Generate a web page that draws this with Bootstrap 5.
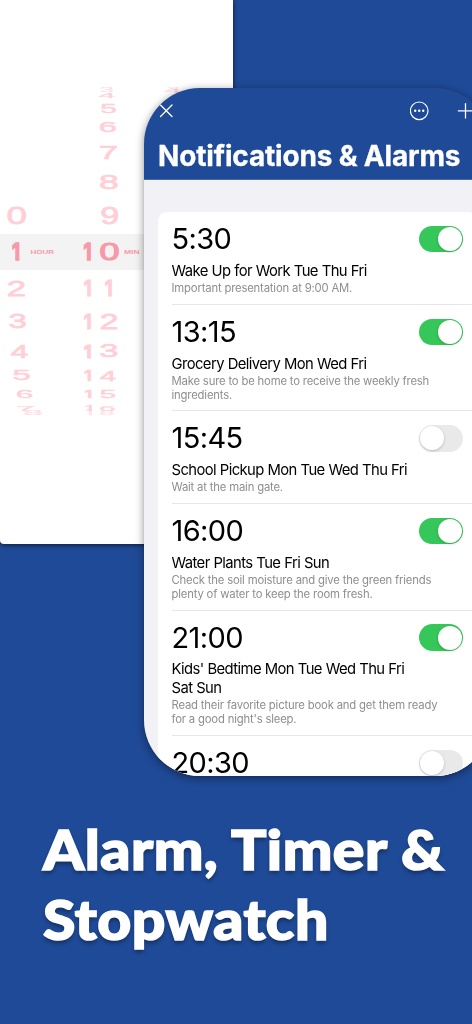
<!DOCTYPE html>
<html lang="en">
<head>
  <meta charset="UTF-8">
  <meta name="viewport" content="width=device-width, initial-scale=1">
  <title>Alarm, Timer &amp; Stopwatch</title>
  <link href="https://cdn.jsdelivr.net/npm/bootstrap@5.3.0/dist/css/bootstrap.min.css" rel="stylesheet">
  <style>
    body {
      background-color: #1f4a97;
      font-family: Inter, "Liberation Sans", sans-serif;
      color: #000;
    }
    .poster {
      width: 472px;
      height: 1024px;
    }
    /* timer screen behind the phone */
    .timer-screen {
      left: 0;
      top: 0;
      width: 233px;
      height: 543.5px;
      background: #fff;
      border-bottom-left-radius: 4px;
      box-shadow: 0 1px 5px rgba(0, 0, 0, .65);
    }
    .wheel-light { fill: #ffcfd7; stroke: #ffcfd7; }
    .wheel-dark { fill: #f799a8; stroke: #f799a8; }
    .phone {
      width: 347px;
      height: 688.5px;
      margin: 87.5px 0 0 144px;
      border-radius: 56px;
      background: #1f4a97;
    }
    .phone-shadow {
      width: 347px;
      filter: drop-shadow(0 2px 4px rgba(0, 0, 0, .45));
    }
    .phone-header {
      height: 92.5px;
      border-bottom: 1px solid #4669a9;
      padding: 12.5px 0 0 14px;
    }
    .phone-header .toolbar { height: 22px; width: 320px; }
    .phone-header h1 {
      font-size: 28px;
      line-height: 34px;
      margin-top: 16.5px;
      letter-spacing: -.17px;
      -webkit-text-stroke: .3px #fff;
    }
    .phone-body {
      height: 596px;
      padding: 32px 14px 0;
      background: #f2f1f6;
    }
    .alarm-list {
      background: #fff;
      border-radius: 9px;
      padding-left: 13.5px;
    }
    .alarm {
      padding: 9px 14px 7.9px 0;
      border-bottom: 1px solid #e6e6e8;
    }
    .alarm-time {
      font-size: 29px;
      line-height: 36px;
      letter-spacing: -.6px;
    }
    .alarm-name {
      font-size: 14.8px;
      line-height: 18.6px;
      letter-spacing: -.58px;
      word-spacing: .2px;
      padding-top: 4.8px;
    }
    .alarm-note {
      font-size: 11.3px;
      line-height: 13.8px;
      letter-spacing: -.18px;
      padding-top: 1.7px;
      color: #8e8e90;
    }
    .toggle {
      width: 44px;
      height: 26.5px;
      border-radius: 14px;
      background: #e9e9ea;
      padding: 1.25px;
    }
    .toggle.on { background: #35c759; }
    .knob {
      width: 24px;
      height: 24px;
      border-radius: 50%;
      background: #fff;
      box-shadow: 0 1px 3px rgba(0, 0, 0, .2);
    }
    .headline {
      font-family: Lato, "Open Sans", sans-serif;
      font-weight: 900;
      font-size: 55px;
      line-height: 69.5px;
      color: #fff;
      margin: 39px 0 0 43px;
      letter-spacing: .5px;
      -webkit-text-stroke: 1.6px #fff;
      text-shadow: 0 3px 4px rgba(0, 0, 0, .4);
      transform: scaleX(1.07);
      transform-origin: left;
    }
  </style>
</head>
<body>
  <div class="poster position-relative overflow-hidden">
    <div class="timer-screen position-absolute">
      <svg id="wheels" width="233" height="540" viewBox="0 0 233 540">
        <rect x="0" y="234" width="233" height="36" fill="#f3f3f3"/>
      </svg>
    </div>

    <div class="phone-shadow position-relative d-inline-block align-top">
      <div class="phone overflow-hidden">
        <div class="phone-header text-white">
          <div class="toolbar d-flex align-items-center">
            <svg width="16" height="22" viewBox="0 0 16 22" fill="none" stroke="#fff" stroke-width="1.3" stroke-linecap="round">
              <path d="M2.5 5 L14 16.5 M14 5 L2.5 16.5"/>
            </svg>
            <svg class="ms-auto" width="20" height="22" viewBox="0 0 20 22">
              <circle cx="9.2" cy="10.8" r="8.8" fill="none" stroke="#fff" stroke-width="1.2"/>
              <circle cx="5.2" cy="10.8" r="1.2" fill="#fff"/>
              <circle cx="9.2" cy="10.8" r="1.2" fill="#fff"/>
              <circle cx="13.2" cy="10.8" r="1.2" fill="#fff"/>
            </svg>
            <svg class="ms-4" width="24" height="22" viewBox="0 0 24 22" stroke="#fff" stroke-width="1.3" stroke-linecap="round">
              <path d="M4.3 10.8 H19 M11.5 3.6 V18"/>
            </svg>
          </div>
          <h1 class="fw-bold mb-0 text-nowrap">Notifications &amp; Alarms</h1>
        </div>

        <div class="phone-body">
          <div class="alarm-list text-nowrap">
            <div class="alarm">
              <div class="d-flex justify-content-between align-items-center">
                <div class="alarm-time">5:30</div>
                <div class="toggle on d-flex justify-content-end"><div class="knob"></div></div>
              </div>
              <div class="alarm-name">Wake Up for Work Tue Thu Fri</div>
              <div class="alarm-note">Important presentation at 9:00 AM.</div>
            </div>
            <div class="alarm">
              <div class="d-flex justify-content-between align-items-center">
                <div class="alarm-time">13:15</div>
                <div class="toggle on d-flex justify-content-end"><div class="knob"></div></div>
              </div>
              <div class="alarm-name">Grocery Delivery Mon Wed Fri</div>
              <div class="alarm-note">Make sure to be home to receive the weekly fresh<br>ingredients.</div>
            </div>
            <div class="alarm">
              <div class="d-flex justify-content-between align-items-center">
                <div class="alarm-time">15:45</div>
                <div class="toggle d-flex"><div class="knob"></div></div>
              </div>
              <div class="alarm-name">School Pickup Mon Tue Wed Thu Fri</div>
              <div class="alarm-note">Wait at the main gate.</div>
            </div>
            <div class="alarm">
              <div class="d-flex justify-content-between align-items-center">
                <div class="alarm-time">16:00</div>
                <div class="toggle on d-flex justify-content-end"><div class="knob"></div></div>
              </div>
              <div class="alarm-name">Water Plants Tue Fri Sun</div>
              <div class="alarm-note">Check the soil moisture and give the green friends<br>plenty of water to keep the room fresh.</div>
            </div>
            <div class="alarm">
              <div class="d-flex justify-content-between align-items-center">
                <div class="alarm-time">21:00</div>
                <div class="toggle on d-flex justify-content-end"><div class="knob"></div></div>
              </div>
              <div class="alarm-name">Kids' Bedtime Mon Tue Wed Thu Fri<br>Sat Sun</div>
              <div class="alarm-note">Read their favorite picture book and get them ready<br>for a good night's sleep.</div>
            </div>
            <div class="alarm">
              <div class="d-flex justify-content-between align-items-center">
                <div class="alarm-time">20:30</div>
                <div class="toggle d-flex"><div class="knob"></div></div>
              </div>
            </div>
          </div>
        </div>
      </div>
    </div>

    <div class="headline text-nowrap">
      <div>Alarm, Timer &amp;</div>
      <div>Stopwatch</div>
    </div>
  </div>

  <script src="https://cdn.jsdelivr.net/npm/bootstrap@5.3.0/dist/js/bootstrap.bundle.min.js"></script>
  <script>
    // wheel labels: text, left, top, right, bottom, dark, opacity
    const labels = [
      ["0", 7, 207, 26, 224.5], ["1", 12, 242, 19.5, 260.5, 1], ["HOUR", 31, 249.7, 54, 254, 1],
      ["2", 8, 279, 25, 296], ["3", 9, 313, 26, 329], ["4", 11, 344, 28, 358],
      ["5", 13.5, 370, 30, 381], ["6", 17, 390.5, 32.5, 398.5],
      ["7", 17, 405, 34, 411, 0, .9], ["8", 24, 410, 42, 415.5, 0, .7],
      ["3", 100, 87.5, 113, 92.5, 0, .7], ["4", 99, 93, 115, 98],
      ["5", 101, 104, 116, 113], ["6", 100, 122, 116, 133], ["7", 100, 145, 117, 159],
      ["8", 100, 174, 118, 190], ["9", 101, 207, 118, 224.5],
      ["1", 83.5, 242, 91, 260.5, 1], ["0", 100, 242, 119, 260.5, 1], ["MIN", 124.5, 249.7, 139, 254, 1],
      ["1", 84, 279, 91, 296], ["1", 105, 279, 112, 296],
      ["1", 84, 313, 91, 329], ["2", 101, 313, 117.5, 329],
      ["1", 84, 344, 91, 358], ["3", 100, 344, 117.5, 358],
      ["1", 84.5, 370, 91, 381], ["4", 100, 370, 116, 381],
      ["1", 85, 390.5, 91.5, 398.5], ["5", 100.5, 390.5, 115.5, 398.5],
      ["1", 85.5, 405, 92, 411, 0, .9], ["6", 100, 405, 115, 411, 0, .9],
      ["1", 86, 410, 92, 415.5, 0, .6], ["8", 100, 410, 114, 415.5, 0, .6],
      ["3", 166, 87.5, 179, 90, 0, .7], ["4", 164, 89, 181, 93, 0, .8]
    ];

    const svg = document.getElementById("wheels");
    const ctx = document.createElement("canvas").getContext("2d");

    // stretch each label into its box on the wheel
    labels.forEach(([text, x1, y1, x2, y2, dark, opacity]) => {
      const family = text === "1" ? "Inter" : "Liberation Sans";
      const weight = text === "1" || text.length > 1 ? 700 : 400;
      // digits get an even outline, thinner towards the ends of the wheel
      const stroke = text.length > 1 ? 0 : (dark ? 1.4 : Math.min(1, (y2 - y1) / 14));
      const h = stroke / 2;
      ctx.font = `${weight} 100px "${family}"`;
      const m = ctx.measureText(text);
      const sx = (x2 - x1 - stroke) / (m.actualBoundingBoxLeft + m.actualBoundingBoxRight);
      const sy = (y2 - y1 - stroke) / (m.actualBoundingBoxAscent + m.actualBoundingBoxDescent);
      const t = document.createElementNS("http://www.w3.org/2000/svg", "text");
      t.setAttribute("transform", `matrix(${sx} 0 0 ${sy} ${x1 + h + m.actualBoundingBoxLeft * sx} ${y2 - h - m.actualBoundingBoxDescent * sy})`);
      t.setAttribute("font-family", family);
      t.setAttribute("font-size", 100);
      t.setAttribute("font-weight", weight);
      t.setAttribute("class", dark ? "wheel-dark" : "wheel-light");
      t.setAttribute("stroke-width", stroke);
      t.setAttribute("vector-effect", "non-scaling-stroke");
      t.setAttribute("opacity", opacity || 1);
      t.textContent = text;
      svg.appendChild(t);
    });
  </script>
</body>
</html>
